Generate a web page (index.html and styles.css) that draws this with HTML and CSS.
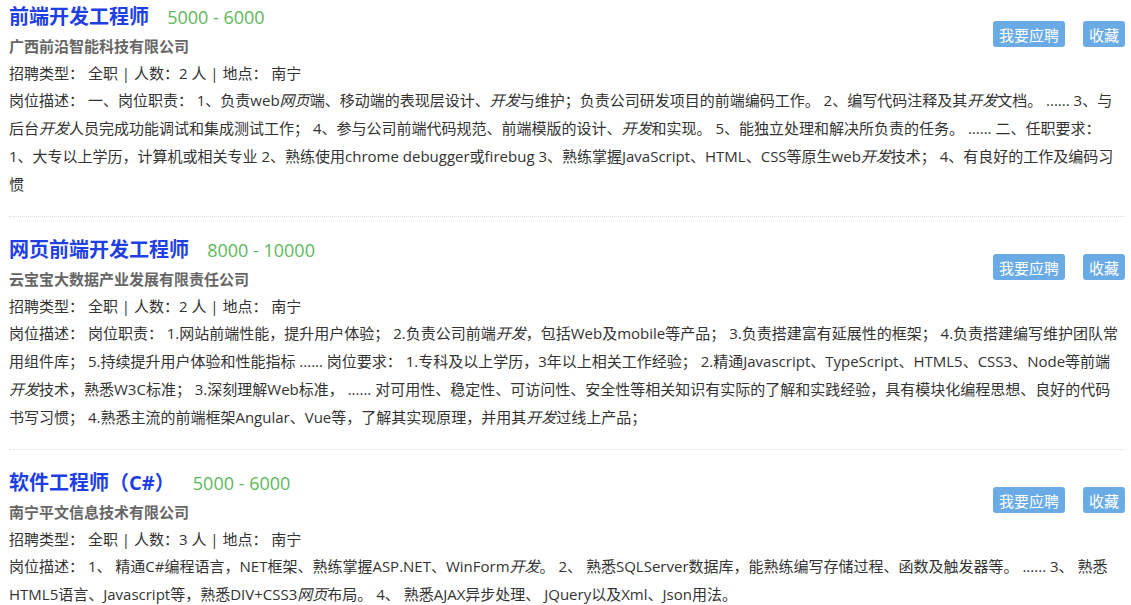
FILE: index.html
```html
<!DOCTYPE html>
<html lang="zh-CN">

<head>
    <meta charset="UTF-8">
    <meta name="viewport" content="width=device-width, initial-scale=1.0">
    <title>职位列表</title>
    <link rel="stylesheet" href="styles.css">
</head>

<body>
    <div class="job-list">
        <div class="job">
            <div class="job-head">
                <div class="job-main">
                    <div class="job-title">
                        <a class="name" href="#">前端开发工程师</a>
                        <span class="salary">5000 - 6000</span>
                    </div>
                    <div class="company">广西前沿智能科技有限公司</div>
                </div>
                <div class="actions">
                    <button class="btn">我要应聘</button>
                    <button class="btn">收藏</button>
                </div>
            </div>
            <div class="info">招聘类型： 全职 | 人数：2 人 | 地点： 南宁</div>
            <div class="desc">岗位描述： 一、岗位职责： 1、负责web<em>网页</em>端、移动端的表现层设计、<em>开发</em>与维护；负责公司研发项目的前端编码工作。 2、编写代码注释及其<em>开发</em>文档。 ...... 3、与后台<em>开发</em>人员完成功能调试和集成测试工作； 4、参与公司前端代码规范、前端模版的设计、<em>开发</em>和实现。 5、能独立处理和解决所负责的任务。 ...... 二、任职要求： 1、大专以上学历，计算机或相关专业 2、熟练使用chrome debugger或firebug 3、熟练掌握JavaScript、HTML、CSS等原生web<em>开发</em>技术； 4、有良好的工作及编码习惯</div>
        </div>

        <div class="job">
            <div class="job-head">
                <div class="job-main">
                    <div class="job-title">
                        <a class="name" href="#">网页前端开发工程师</a>
                        <span class="salary">8000 - 10000</span>
                    </div>
                    <div class="company">云宝宝大数据产业发展有限责任公司</div>
                </div>
                <div class="actions">
                    <button class="btn">我要应聘</button>
                    <button class="btn">收藏</button>
                </div>
            </div>
            <div class="info">招聘类型： 全职 | 人数：2 人 | 地点： 南宁</div>
            <div class="desc">岗位描述： 岗位职责： 1.网站前端性能，提升用户体验； 2.负责公司前端<em>开发</em>，包括Web及mobile等产品； 3.负责搭建富有延展性的框架； 4.负责搭建编写维护团队常用组件库； 5.持续提升用户体验和性能指标 ...... 岗位要求： 1.专科及以上学历，3年以上相关工作经验； 2.精通Javascript、TypeScript、HTML5、CSS3、Node等前端<em>开发</em>技术，熟悉W3C标准； 3.深刻理解Web标准， ...... 对可用性、稳定性、可访问性、安全性等相关知识有实际的了解和实践经验，具有模块化编程思想、良好的代码书写习惯； 4.熟悉主流的前端框架Angular、Vue等，了解其实现原理，并用其<em>开发</em>过线上产品；</div>
        </div>

        <div class="job">
            <div class="job-head">
                <div class="job-main">
                    <div class="job-title">
                        <a class="name" href="#">软件工程师（C#）</a>
                        <span class="salary">5000 - 6000</span>
                    </div>
                    <div class="company">南宁平文信息技术有限公司</div>
                </div>
                <div class="actions">
                    <button class="btn">我要应聘</button>
                    <button class="btn">收藏</button>
                </div>
            </div>
            <div class="info">招聘类型： 全职 | 人数：3 人 | 地点： 南宁</div>
            <div class="desc">岗位描述： 1、 精通C#编程语言，NET框架、熟练掌握ASP.NET、WinForm<em>开发</em>。 2、 熟悉SQLServer数据库，能熟练编写存储过程、函数及触发器等。 ...... 3、 熟悉HTML5语言、Javascript等，熟悉DIV+CSS3<em>网页</em>布局。 4、 熟悉AJAX异步处理、 JQuery以及Xml、Json用法。</div>
        </div>
    </div>
</body>

</html>
```

FILE: styles.css
```css
body {
    margin: 0;
    background-color: #fff;
    font-family: 'Open Sans', 'Noto Sans CJK SC', sans-serif;
    color: #333;
}

.job-list {
    padding: 0 6px 0 9px;
}

.job {
    padding: 18px 0;
    border-bottom: 1px dotted #ddd;
}

.job:first-child {
    padding-top: 2px;
}

.job-head {
    display: flex;
    justify-content: space-between;
    align-items: center;
}

.job-title {
    height: 30px;
    line-height: 30px;
    white-space: nowrap;
}

.name {
    font-size: 20px;
    font-weight: bold;
    color: #1e3fe3;
    text-decoration: none;
}

.salary {
    margin-left: 14px;
    font-size: 18px;
    color: #5cb85c;
}

.company {
    line-height: 28px;
    font-size: 15px;
    font-weight: bold;
    color: #666;
}

.actions {
    display: flex;
    gap: 18px;
    margin-top: 6px;
}

.btn {
    height: 26px;
    padding: 0 6px;
    border: none;
    border-radius: 3px;
    background-color: #6aabe5;
    color: #fff;
    font-family: inherit;
    font-size: 15px;
    cursor: pointer;
}

.btn:hover {
    background-color: #5a9bd5;
}

.info {
    font-size: 15px;
    line-height: 26px;
}

.desc {
    font-size: 15px;
    line-height: 28px;
}

.desc em {
    font-style: italic;
}
```
